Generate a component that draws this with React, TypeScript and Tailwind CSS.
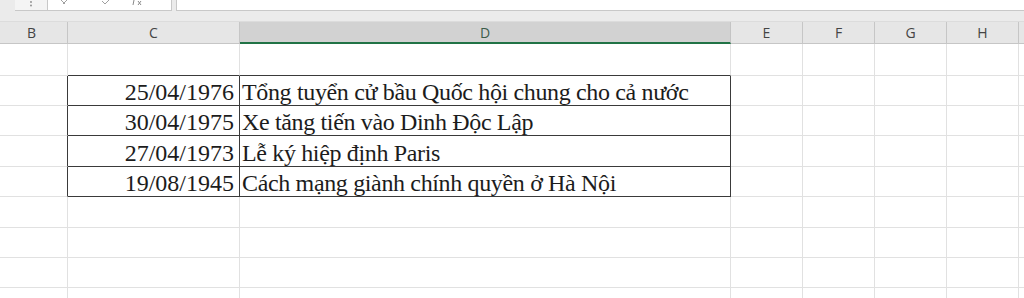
import React from "react";

const cols = [
  { key: "B", w: "w-[72px]" },
  { key: "C", w: "w-[172px]" },
  { key: "D", w: "w-[491px]" },
  { key: "E", w: "w-[72px]" },
  { key: "F", w: "w-[72px]" },
  { key: "G", w: "w-[72px]" },
  { key: "H", w: "w-[72px]" },
  { key: "I", w: "w-[72px]" },
];

// sheet rows, heights include the bottom gridline
const rowHeights = ["h-[32px]", "h-[30px]", "h-[30px]", "h-[31px]", "h-[30px]", "h-[31px]", "h-[30px]", "h-[30px]", "h-[30px]"];

const events: Record<number, [string, string]> = {
  1: ["25/04/1976", "Tổng tuyển cử bầu Quốc hội chung cho cả nước"],
  2: ["30/04/1975", "Xe tăng tiến vào Dinh Độc Lập"],
  3: ["27/04/1973", "Lễ ký hiệp định Paris"],
  4: ["19/08/1945", "Cách mạng giành chính quyền ở Hà Nội"],
};

const inTable = (r: number) => r >= 1 && r <= 4;

const Cell = ({ row, col }: { row: number; col: number }) => {
  const key = cols[col].key;
  const data = events[row];
  const tableCol = key === "C" || key === "D";

  // dark borders around the bordered range C2:D5
  const right =
    (tableCol && inTable(row)) || (key === "B" && inTable(row)) ? "border-r-[#3a3a3a]" : "border-r-[#e1e1e1]";
  const bottom =
    tableCol && (inTable(row) || row === 0) ? "border-b-[#3a3a3a]" : "border-b-[#e1e1e1]";

  let content: React.ReactNode = null;
  if (data && key === "C") {
    content = <span className="w-full text-right pr-[5px] pb-[1px]">{data[0]}</span>;
  } else if (data && key === "D") {
    content = <span className="pl-[2px] pb-[1px] tracking-[-0.35px]">{data[1]}</span>;
  }

  return (
    <div
      className={`${cols[col].w} shrink-0 flex items-end border-r border-b ${right} ${bottom} whitespace-nowrap leading-none`}
    >
      {content}
    </div>
  );
};

export default function App() {
  return (
    <div className="w-[1024px] h-[298px] overflow-hidden bg-white">
      {/* formula bar strip, only its lower edge is in view */}
      <div className="h-[22px] bg-[#ebebeb] border-b border-[#dcdcdc]">
        <div className="flex h-[11px]">
          <div className="w-[15px]" />
          <div className="w-[33px] bg-[#f4f4f4] border-b border-r border-[#c8c8c8] flex justify-center">
            <svg width="4" height="6" viewBox="0 0 4 6" className="mt-[1px]">
              <circle cx="2" cy="1" r="0.9" fill="#8a8a8a" />
              <circle cx="2" cy="4.5" r="0.9" fill="#8a8a8a" />
            </svg>
          </div>
          <div className="w-[124px] bg-white border-b border-r border-[#c8c8c8] flex items-start">
            <svg width="8" height="5" viewBox="0 0 8 5" className="ml-[12px]">
              <path d="M1 0 L5 4 M7 0 L3 4" stroke="#a0a0a0" strokeWidth="1" fill="none" />
            </svg>
            <svg width="8" height="5" viewBox="0 0 8 5" className="ml-[34px]">
              <path d="M0 1 L3 4 L7 0" stroke="#a0a0a0" strokeWidth="1" fill="none" />
            </svg>
            <svg width="10" height="6" viewBox="0 0 10 6" className="ml-[22px]">
              <path d="M2 0 L1 5 M6 1 L9 5 M9 1 L6 5" stroke="#8a8a8a" strokeWidth="1" fill="none" />
            </svg>
          </div>
          <div className="w-[4px]" />
          <div className="flex-1 bg-white border-l border-b border-[#c8c8c8]" />
        </div>
      </div>

      <div className="-ml-[4px]">
        {/* column headers; the I header runs off the right edge, so no letter */}
        <div className="flex h-[22px] font-['Open_Sans',sans-serif] text-[14px]">
          {cols.map((c) =>
            c.key === "D" ? (
              <div
                key={c.key}
                className={`${c.w} shrink-0 flex items-center justify-center bg-[#d2d2d2] border-r border-[#c4c4c4] border-b-2 border-b-[#217346] text-[#3b5c4a]`}
              >
                {c.key}
              </div>
            ) : (
              <div
                key={c.key}
                className={`${c.w} shrink-0 flex items-center justify-center bg-[#e6e6e6] border-r border-b border-[#c6c6c6] text-[#444444]`}
              >
                {c.key === "I" ? null : c.key}
              </div>
            )
          )}
        </div>

        {/* sheet body */}
        <div className="font-['Liberation_Serif',serif] text-[24px] text-[#1c1c1c]">
          {rowHeights.map((h, r) => (
            <div key={r} className={`flex ${h}`}>
              {cols.map((_, c) => (
                <Cell key={c} row={r} col={c} />
              ))}
            </div>
          ))}
        </div>
      </div>
    </div>
  );
}
